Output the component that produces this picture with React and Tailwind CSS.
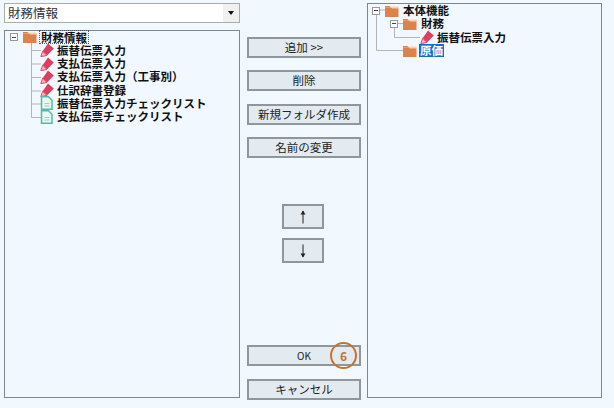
const font = { fontFamily: '"Noto Sans CJK JP", "Liberation Sans", sans-serif' };

const Folder = () => (
  <svg width="14" height="12" viewBox="0 0 14 12" className="shrink-0">
    <path d="M0 1h4.5l1.5 1.5H0z" fill="#dd8249" />
    <path d="M0 2.5h13.5V12H0z" fill="#dd8249" />
    <path d="M5.5 1.5h8V3.5H7z" fill="#f3d3b4" />
  </svg>
);

const Pencil = () => (
  <svg width="14" height="14" viewBox="0 0 14 14" className="shrink-0">
    <path d="M8 0.5L13.8 5.5L7 12.5L2.6 8.2z" fill="#dc3f5e" />
    <path d="M2.6 8.2L7 12.5L0.8 13.6z" fill="#f6b8c3" stroke="#dc3f5e" strokeWidth="0.9" />
  </svg>
);

const Doc = () => (
  <svg width="14" height="14" viewBox="0 0 14 14" className="shrink-0">
    <path d="M1.5 0.8h7l3.5 3.5v9h-10.5z" fill="#e9f6f3" stroke="#55bba8" strokeWidth="1.5" />
    <path d="M4.5 7.5h5M4.5 10h5" stroke="#a9c9c4" strokeWidth="1" />
  </svg>
);

const Minus = () => (
  <span className="flex h-[8px] w-[8px] shrink-0 items-center justify-center border border-[#9a9a9a] bg-white">
    <span className="h-px w-[4px] bg-[#444]" />
  </span>
);

const Arrow = ({ down }) => (
  <svg width="8" height="14" viewBox="0 0 8 14" className={down ? "rotate-180" : ""}>
    <path d="M4 1V13.5" stroke="#222" strokeWidth="1" fill="none" />
    <path d="M4 0.5L6.5 4.5H1.5z" fill="#222" />
  </svg>
);

const Row = ({ pl, minus, icon, gap = "ml-[3px]", children }) => (
  <div className="flex h-[13.3px] items-center whitespace-nowrap" style={{ paddingLeft: pl }}>
    {minus && <span className="mr-[5px]"><Minus /></span>}
    {icon}
    <span className={`${gap} block leading-[13px]`}>{children}</span>
  </div>
);

const Btn = ({ children, className = "" }) => (
  <div className={`flex h-[21px] items-center justify-center border-2 border-[#8f979c] bg-[#e3eaf0] text-[11.5px] leading-[15px] text-[#222] ${className}`}>
    {children}
  </div>
);

const leftItems = [
  ["振替伝票入力", "p"],
  ["支払伝票入力", "p"],
  ["支払伝票入力（工事別）", "p"],
  ["仕訳辞書登録", "p"],
  ["振替伝票入力チェックリスト", "d"],
  ["支払伝票チェックリスト", "d"],
];

export default function App() {
  return (
    <div className="flex h-[408px] w-[614px] overflow-hidden bg-[#f1f8fe] text-[#111]" style={font}>
      {/* 左カラム */}
      <div className="ml-[4px] mt-[3px] w-[236px] shrink-0">
        <div className="flex h-[20px] items-center justify-between border border-[#a9adb0] bg-white pl-[3px] text-[12.5px] text-[#333]">
          <span>財務情報</span>
          <span className="flex h-full w-[16px] items-center justify-center bg-[#f0f0f0]">
            <span className="h-0 w-0 border-x-[3px] border-t-[4px] border-x-transparent border-t-[#111]" />
          </span>
        </div>
        <div className="relative mt-[7px] h-[368px] border border-[#7f878c] bg-[#f2f8ff] text-[11.5px] font-bold">
          <svg width="60" height="100" className="absolute left-0 top-0">
            <path d="M26.5 10V86.5M26.5 19.5H36M26.5 33H36M26.5 46.5H36M26.5 60H36M26.5 73H36M26.5 86.5H36" stroke="#b5b5b5" fill="none" />
          </svg>
          <div className="relative">
            <div className="flex h-[12.6px] items-center pl-[5px]">
              <span className="mr-[5px]"><Minus /></span>
              <Folder />
              <span className="ml-[2px] border border-dotted border-[#555] px-px leading-[12px]">財務情報</span>
            </div>
            {leftItems.map(([label, kind]) => (
              <Row key={label} pl={35} icon={kind === "p" ? <Pencil /> : <Doc />}>{label}</Row>
            ))}
          </div>
        </div>
      </div>

      {/* 中央ボタン */}
      <div className="ml-[7px] flex w-[114px] shrink-0 flex-col pt-[37px]">
        <Btn>追加 &gt;&gt;</Btn>
        <Btn className="mt-[12px]">削除</Btn>
        <Btn className="mt-[13px]">新規フォルダ作成</Btn>
        <Btn className="mt-[12px]">名前の変更</Btn>
        <div className="ml-[35px] mt-[46px] w-[42px]">
          <Btn className="h-[25px]"><Arrow /></Btn>
        </div>
        <div className="ml-[35px] mt-[9px] w-[42px]">
          <Btn className="h-[25px]"><Arrow down /></Btn>
        </div>
        <div className="relative mt-[82px]">
          <Btn><span className="text-[10px]">OK</span></Btn>
          <span className="absolute left-[83px] top-[-3px] flex h-[27px] w-[27px] items-center justify-center rounded-full border-2 border-[#c4742f] text-[12px] font-bold text-[#c4742f]">6</span>
        </div>
        <Btn className="mt-[13px]">キャンセル</Btn>
      </div>

      {/* 右ツリー */}
      <div className="relative ml-[6px] mt-[3px] h-[395px] w-[235px] shrink-0 border border-[#7f878c] bg-[#f2f8ff] text-[11.5px] font-bold">
        <svg width="70" height="60" className="absolute left-0 top-0">
          <path d="M8.5 10V46.5H35M8.5 6H17M26.5 24V33.5H52M26.5 19.5H35" stroke="#b5b5b5" fill="none" />
        </svg>
        <div className="relative">
          <Row pl={4} minus icon={<Folder />} gap="ml-[4px]">本体機能</Row>
          <Row pl={22} minus icon={<Folder />} gap="ml-[4px]">財務</Row>
          <Row pl={52} icon={<Pencil />}>振替伝票入力</Row>
          <div className="flex h-[13.3px] items-center pl-[35px]">
            <Folder />
            <span className="ml-[2px] bg-[#0a6fd0] px-px leading-[13px] text-white">原価</span>
          </div>
        </div>
      </div>
    </div>
  );
}
